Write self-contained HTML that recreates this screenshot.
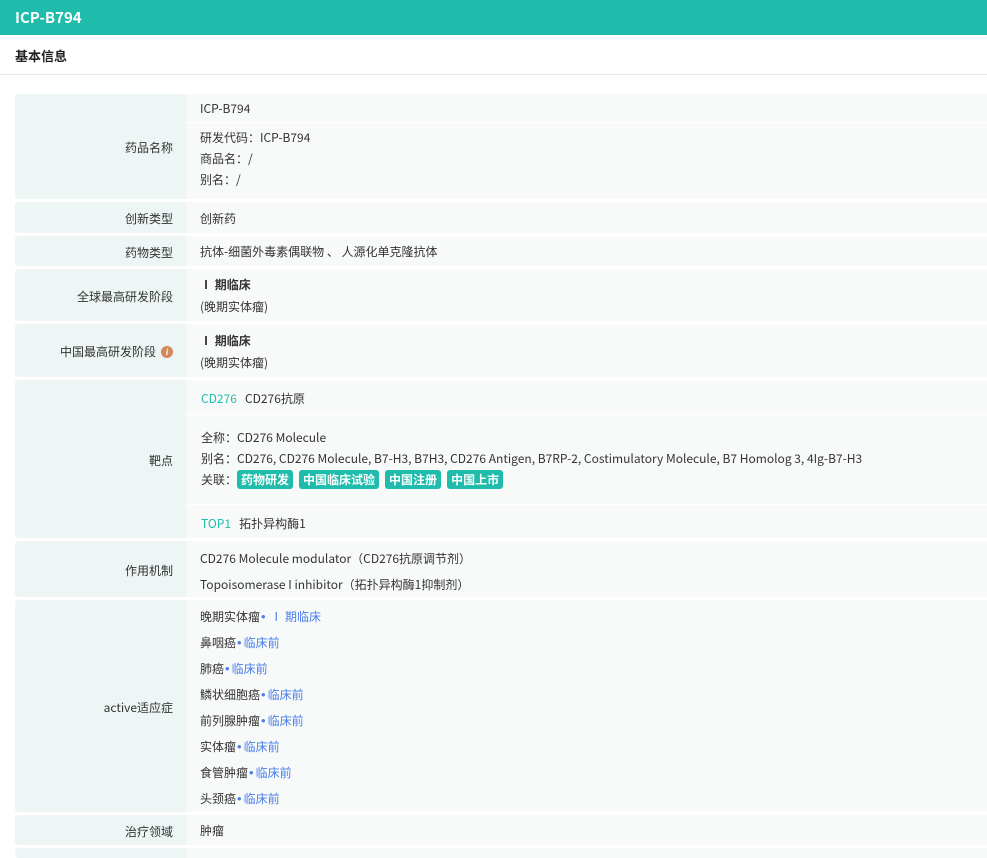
<!DOCTYPE html><html><head><meta charset="utf-8"><style>
*{margin:0;padding:0;box-sizing:border-box}
body{width:987px;height:851px;overflow:hidden;background:#fff;font-family:"Noto Sans CJK SC","Liberation Sans",sans-serif;font-size:12px;color:#333;position:relative}
.hd{position:absolute;left:0;top:0;width:987px;height:35px;background:#1fbcac;color:#fff;font-weight:bold;font-size:15px;line-height:35px;padding-left:15px}
.st{position:absolute;left:0;top:35px;width:987px;height:40px;border-bottom:1px solid #e6e6e6;font-weight:bold;font-size:13px;line-height:42px;padding-left:15px;color:#222}
.l{position:absolute;left:15px;width:171px;background:#eef5f5;text-align:right;padding-right:13px;display:flex;align-items:center;justify-content:flex-end;border-radius:3px 0 0 3px;padding-top:2px}
.v{position:absolute;left:186px;right:0;background:#f8fafa}
.t{position:absolute;left:200px;line-height:16px;white-space:nowrap;margin-top:1px}
.sep{position:absolute;left:186px;right:0;height:1px;background:#fff}
.c{color:#1fbcac}.b{color:#4a7ee8}.d{color:#4a7ee8;font-family:"Liberation Sans",sans-serif;font-size:13px;margin:0 2px 0 1px}
.tag{display:inline-block;background:#1fbcac;color:#fff;font-weight:bold;border-radius:3px;padding:0 4px;line-height:19px;margin-right:6px}
.i{display:inline-block;width:12px;height:12px;border-radius:50%;background:#d4885a;color:#fff;font-size:9px;line-height:12px;text-align:center;font-style:italic;font-weight:bold;margin-left:5px;font-family:"Liberation Serif",serif}
</style></head><body>
<div class="hd">ICP-B794</div>
<div class="st">基本信息</div>

<div class="l" style="top:94px;height:105px">药品名称</div><div class="v" style="top:94px;height:105px"></div>
<div class="sep" style="top:122px"></div>
<div class="t" style="top:100px">ICP-B794</div>
<div class="t" style="top:129px">研发代码：ICP-B794</div>
<div class="t" style="top:150px">商品名：/</div>
<div class="t" style="top:171px">别名：/</div>

<div class="l" style="top:202px;height:31px">创新类型</div><div class="v" style="top:202px;height:31px"></div>
<div class="t" style="top:210px">创新药</div>

<div class="l" style="top:236px;height:30px">药物类型</div><div class="v" style="top:236px;height:30px"></div>
<div class="t" style="top:243px">抗体-细菌外毒素偶联物 、 人源化单克隆抗体</div>

<div class="l" style="top:269px;height:52px">全球最高研发阶段</div><div class="v" style="top:269px;height:52px"></div>
<div class="t" style="top:276px;font-weight:bold">Ⅰ 期临床</div>
<div class="t" style="top:298px">(晚期实体瘤)</div>

<div class="l" style="top:324px;height:53px">中国最高研发阶段<span class="i">i</span></div><div class="v" style="top:324px;height:53px"></div>
<div class="t" style="top:332px;font-weight:bold">Ⅰ 期临床</div>
<div class="t" style="top:354px">(晚期实体瘤)</div>

<div class="l" style="top:380px;height:158px">靶点</div><div class="v" style="top:380px;height:158px"></div>
<div class="sep" style="top:414px"></div><div class="sep" style="top:504px"></div>
<div class="t" style="top:390px;left:201px"><span class="c">CD276</span>&nbsp;&nbsp; CD276抗原</div>
<div class="t" style="top:429px;left:201px">全称：CD276 Molecule</div>
<div class="t" style="top:450px;left:201px">别名：CD276, CD276 Molecule, B7-H3, B7H3, CD276 Antigen, B7RP-2, Costimulatory Molecule, B7 Homolog 3, 4Ig-B7-H3</div>
<div class="t" style="top:469px;left:201px;line-height:20px">关联：<span class="tag">药物研发</span><span class="tag">中国临床试验</span><span class="tag">中国注册</span><span class="tag">中国上市</span></div>
<div class="t" style="top:515px;left:201px"><span class="c">TOP1</span>&nbsp;&nbsp; 拓扑异构酶1</div>

<div class="l" style="top:541px;height:56px">作用机制</div><div class="v" style="top:541px;height:56px"></div>
<div class="t" style="top:550px">CD276 Molecule modulator（CD276抗原调节剂）</div>
<div class="t" style="top:576px">Topoisomerase I inhibitor（拓扑异构酶1抑制剂）</div>

<div class="l" style="top:600px;height:212px">active适应症</div><div class="v" style="top:600px;height:212px"></div>
<div class="t" style="top:608px">晚期实体瘤<span class="d">•</span> <span class="b">Ⅰ 期临床</span></div>
<div class="t" style="top:634px">鼻咽癌<span class="d">•</span><span class="b">临床前</span></div>
<div class="t" style="top:660px">肺癌<span class="d">•</span><span class="b">临床前</span></div>
<div class="t" style="top:686px">鳞状细胞癌<span class="d">•</span><span class="b">临床前</span></div>
<div class="t" style="top:712px">前列腺肿瘤<span class="d">•</span><span class="b">临床前</span></div>
<div class="t" style="top:738px">实体瘤<span class="d">•</span><span class="b">临床前</span></div>
<div class="t" style="top:764px">食管肿瘤<span class="d">•</span><span class="b">临床前</span></div>
<div class="t" style="top:790px">头颈癌<span class="d">•</span><span class="b">临床前</span></div>

<div class="l" style="top:815px;height:30px">治疗领域</div><div class="v" style="top:815px;height:30px"></div>
<div class="t" style="top:822px">肿瘤</div>

<div class="l" style="top:848px;height:10px"></div><div class="v" style="top:848px;height:10px"></div>
</body></html>
